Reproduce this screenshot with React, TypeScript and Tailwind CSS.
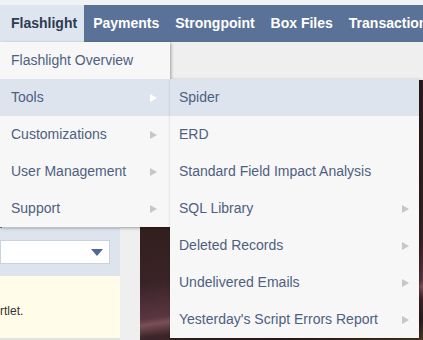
import React from "react";

const font = { fontFamily: '"Liberation Sans", Arial, Helvetica, sans-serif' };

function Arrow({ white }: { white?: boolean }) {
  return (
    <svg width="7" height="8" viewBox="0 0 7 8" className="shrink-0">
      <path d="M0 0 L7 4 L0 8 Z" fill={white ? "#ffffff" : "#c5c7cb"} />
    </svg>
  );
}

type Item = { label: string; arrow?: boolean; active?: boolean };

const menu1: Item[] = [
  { label: "Flashlight Overview" },
  { label: "Tools", arrow: true, active: true },
  { label: "Customizations", arrow: true },
  { label: "User Management", arrow: true },
  { label: "Support", arrow: true },
];

const menu2: Item[] = [
  { label: "Spider", active: true },
  { label: "ERD" },
  { label: "Standard Field Impact Analysis" },
  { label: "SQL Library", arrow: true },
  { label: "Deleted Records", arrow: true },
  { label: "Undelivered Emails", arrow: true },
  { label: "Yesterday's Script Errors Report", arrow: true },
];

export default function App() {
  return (
    <div className="relative w-[423px] h-[340px] overflow-hidden bg-[#efefef]" style={font}>
      {/* top strip */}
      <div className="h-[5px] bg-[#f1f2f4]" />
      {/* nav */}
      <div className="flex h-[37px] bg-[#5b7298] text-[14px] font-bold text-white whitespace-nowrap overflow-hidden">
        <div className="flex items-center pl-[11px] pr-[7px] bg-[#dfe5ee] text-[#2c3a52]">Flashlight</div>
        <div className="flex items-center pl-[9px] pr-[7px]">Payments</div>
        <div className="flex items-center pl-[9px] pr-[7px]">Strongpoint</div>
        <div className="flex items-center pl-[9px] pr-[7px]">Box Files</div>
        <div className="flex items-center pl-[9px] pr-[7px]">Transactions</div>
      </div>
      {/* page content */}
      <div className="flex h-[298px]">
        <div className="flex w-[120px] flex-col">
          <div className="h-[10px]" />
          <div className="h-[176px] border-l-2 border-[#5b7298] bg-[#f4f4f4]" />
          <div className="flex h-[48px] items-center bg-[#dde4ee] pr-[10px]">
            <div className="flex h-[24px] w-full items-center justify-end border border-[#c9d1dc] bg-white pr-[6px]">
              <svg width="12" height="7" viewBox="0 0 12 7">
                <path d="M0 0 L12 0 L6 7 Z" fill="#4e6a95" />
              </svg>
            </div>
          </div>
          <div className="flex flex-1 flex-col bg-[#fffde9] pt-[26px] text-[12px] text-[#333]">
            <span>rtlet.</span>
          </div>
          <div className="h-[2px] bg-[#e3e3e3]" />
        </div>
        <div className="w-[20px] bg-[#efefef]" />
        <div className="mt-[38px] flex-1 bg-[linear-gradient(172deg,#2a1a1d_0%,#33201f_55%,#3a2328_68%,#5a3640_80%,#7a5058_82%,#3e262b_86%,#2d1c1f_93%,#4a3a20_100%)]" />
      </div>

      {/* menu 1 */}
      <div className="absolute left-0 top-[42px] w-[170px] bg-[#f7f7f7] shadow-[1px_1px_3px_rgba(0,0,0,0.35)] text-[14px] text-[#4e5f80]">
        {menu1.map((it) => (
          <div
            key={it.label}
            className={
              "flex h-[37px] items-center justify-between pl-[11px] pr-[13px] " +
              (it.active ? "bg-[#dde4ee]" : "")
            }
          >
            <span>{it.label}</span>
            {it.arrow && <Arrow white={it.active} />}
          </div>
        ))}
      </div>

      {/* submenu */}
      <div className="absolute left-[170px] top-[79px] w-[249px] bg-[#f7f7f7] shadow-[1px_1px_3px_rgba(0,0,0,0.35)] text-[14px] text-[#4e5f80]">
        {menu2.map((it) => (
          <div
            key={it.label}
            className={
              "flex h-[37px] items-center justify-between pl-[9px] pr-[10px] " +
              (it.active ? "bg-[#dde4ee]" : "")
            }
          >
            <span>{it.label}</span>
            {it.arrow && <Arrow white={it.active} />}
          </div>
        ))}
      </div>
    </div>
  );
}
